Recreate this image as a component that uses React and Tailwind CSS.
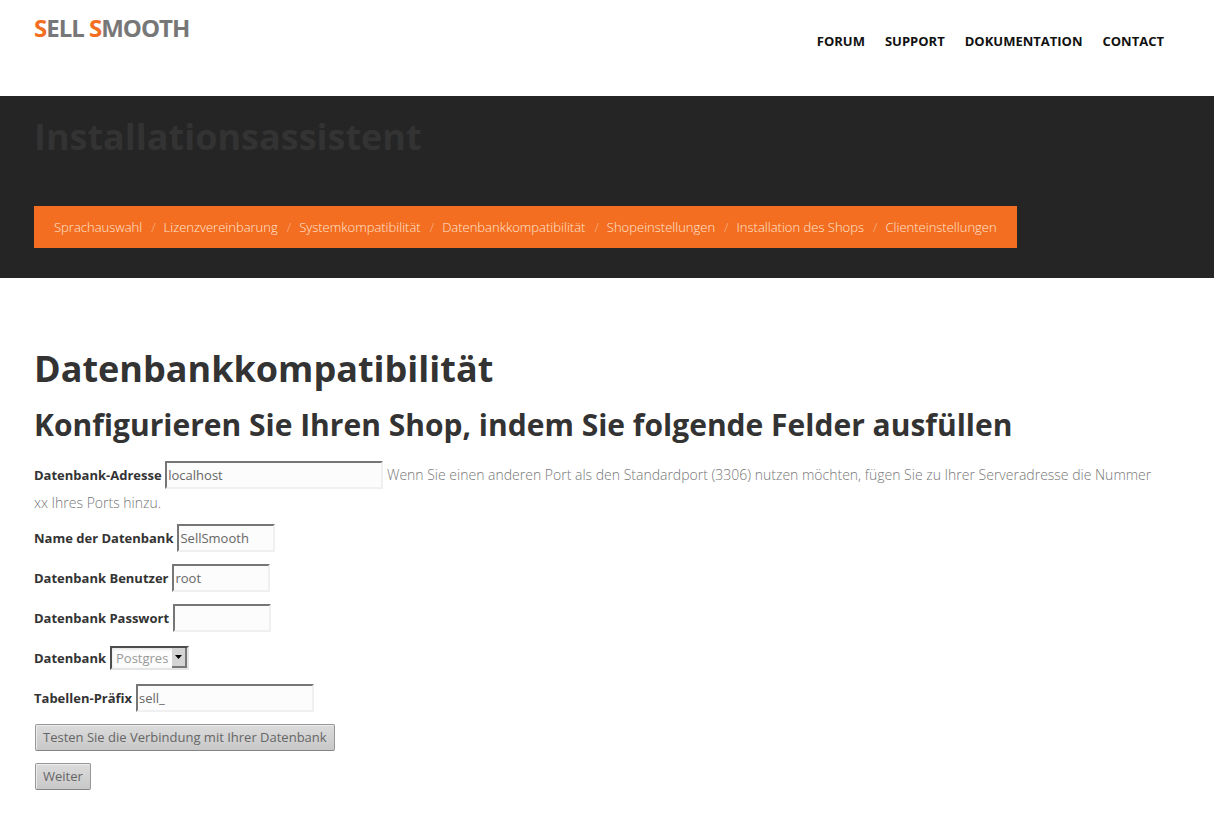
import React from "react";

const container = "mx-auto w-full max-w-[1170px] px-3";

const navItems = ["Forum", "Support", "Dokumentation", "Contact"];

const steps = [
  "Sprachauswahl",
  "Lizenzvereinbarung",
  "Systemkompatibilität",
  "Datenbankkompatibilität",
  "Shopeinstellungen",
  "Installation des Shops",
  "Clienteinstellungen",
];

const labelClass = "text-[13px] font-bold text-[#333]";
const inputClass =
  "h-7 border-2 border-t-[#767676] border-l-[#767676] border-r-[#f0f0f0] border-b-[#f0f0f0] bg-[#fcfcfc] px-px text-[13px] font-normal text-[#666] outline-none";
const buttonClass =
  "rounded-[2px] border border-[#979797] border-b-[#858585] bg-linear-to-b from-[#dcdcdc] to-[#c8c8c8] px-[7px] text-[13px] font-normal text-[#666] shadow-[inset_1px_1px_0_#ececec]";

function Field({ id, label, type = "text", value, width }) {
  return (
    <div className="flex items-center gap-1">
      <label htmlFor={id} className={labelClass}>
        {label}
      </label>
      <input id={id} type={type} defaultValue={value} className={`${inputClass} ${width}`} />
    </div>
  );
}

export default function App() {
  return (
    <div className="bg-white font-['Open_Sans',sans-serif] text-sm font-light text-[#777]">
      <header className="h-24">
        <div className={`${container} flex items-start justify-between`}>
          <a href="#" className="pt-3 text-2xl leading-8 font-bold tracking-[-1px] text-[#777] uppercase">
            <span className="text-[#f36e21]">S</span>ell <span className="text-[#f36e21]">S</span>mooth
          </a>
          <nav className="flex gap-5 pt-[31px] pr-4">
            {navItems.map((item) => (
              <a key={item} href="#" className="text-[13px] leading-5 font-bold text-[#111] uppercase">
                {item}
              </a>
            ))}
          </nav>
        </div>
      </header>

      <section className="bg-[#252525] pt-4 pb-[30px]">
        <div className={container}>
          <h1 className="text-4xl leading-[50px] font-bold text-[#333]">Installationsassistent</h1>
          <ol className="mt-11 flex w-fit flex-wrap bg-[#f36e21] px-5 py-[11px] text-[13px] leading-5 text-[#ffe4d3]">
            {steps.map((step, i) => (
              <li key={step} className="flex">
                {i > 0 && <span className="pr-2 pl-[9px] text-[#f5b58d]">/</span>}
                <a href="#">{step}</a>
              </li>
            ))}
          </ol>
        </div>
      </section>

      <main className={`${container} pt-[70px] pb-10`}>
        <h2 className="text-4xl leading-[42px] font-bold text-[#333]">Datenbankkompatibilität</h2>
        <h3 className="mt-3 text-3xl leading-[46px] font-bold text-[#333]">
          Konfigurieren Sie Ihren Shop, indem Sie folgende Felder ausfüllen
        </h3>
        <form className="mt-[13px] pr-4" onSubmit={(e) => e.preventDefault()}>
          <div className="leading-[27px]">
            <label htmlFor="host" className={labelClass}>
              Datenbank-Adresse
            </label>{" "}
            <input id="host" type="text" defaultValue="localhost" className={`${inputClass} w-[218px]`} />{" "}
            Wenn Sie einen anderen Port als den Standardport (3306) nutzen möchten, fügen Sie zu Ihrer
            Serveradresse die Nummer xx Ihres Ports hinzu.
          </div>
          <div className="mt-2 flex flex-col items-start gap-3">
            <Field id="name" label="Name der Datenbank" value="SellSmooth" width="w-[98px]" />
            <Field id="user" label="Datenbank Benutzer" value="root" width="w-[98px]" />
            <Field id="password" label="Datenbank Passwort" type="password" width="w-[98px]" />
            <div className="flex h-7 items-center gap-1">
              <label htmlFor="driver" className={labelClass}>
                Datenbank
              </label>
              <div className="relative flex">
                <select
                  id="driver"
                  className="h-6 w-[79px] appearance-none border-2 border-t-[#4d4d4d] border-r-[#e4e4e4] border-b-[#e4e4e4] border-l-[#4d4d4d] bg-[#fcfcfc] pl-1 text-[13px] leading-4 font-normal text-[#999] shadow-[inset_0_1px_3px_#ddd] outline-none"
                >
                  <option>Postgres</option>
                </select>
                <span className="pointer-events-none absolute inset-y-[2px] right-[2px] flex w-[15px] items-center justify-center border-r-2 border-b-2 border-[#777] bg-[#d4d4d4]">
                  <svg width="7" height="4" viewBox="0 0 7 4" aria-hidden="true">
                    <path d="M0 0h7L3.5 4z" fill="#000" />
                  </svg>
                </span>
              </div>
            </div>
            <Field id="prefix" label="Tabellen-Präfix" value="sell_" width="w-[178px]" />
            <button type="button" className={`${buttonClass} ml-px h-[27px]`}>
              Testen Sie die Verbindung mit Ihrer Datenbank
            </button>
            <button type="submit" className={`${buttonClass} ml-px h-[27px]`}>
              Weiter
            </button>
          </div>
        </form>
      </main>
    </div>
  );
}
